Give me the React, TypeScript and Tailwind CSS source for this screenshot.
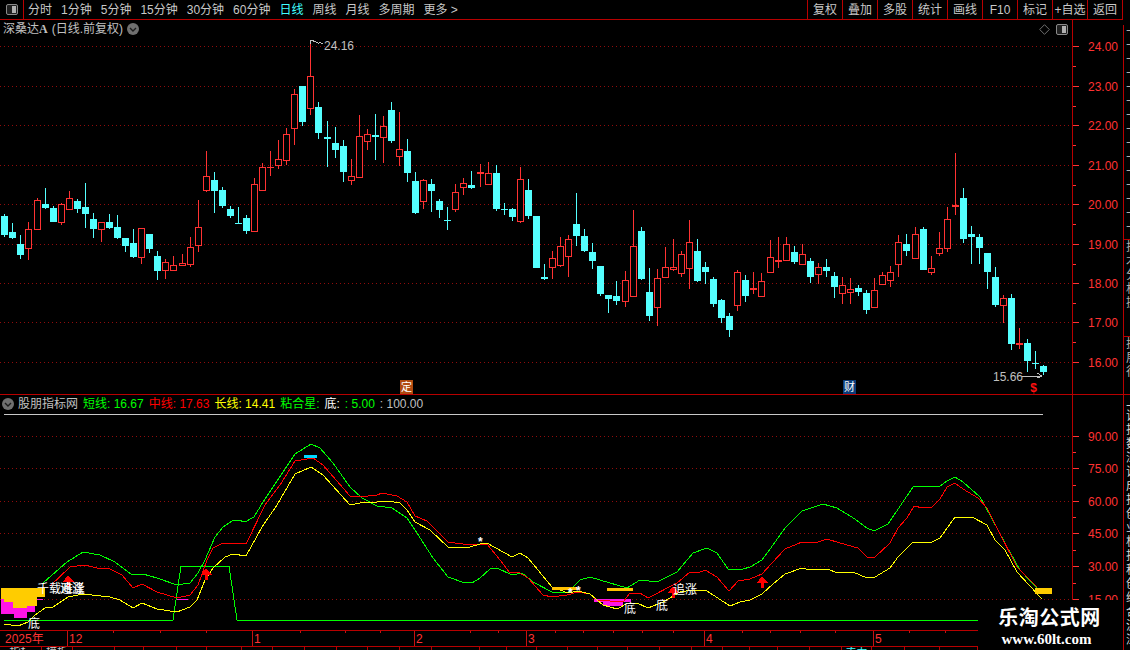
const RED = "#ff3232";
const LINE = "border-[#b80000]";

// candle rows: [isRed, bodyTop, bodyBottom, high, low], measured from a base y at 3x
type Row = number[];
const seg = (base: number, rows: Row[]) =>
  rows.map(([r, t, b, h, l]) => ({
    red: r === 1,
    top: Math.round(base + t / 3),
    bot: Math.round(base + b / 3),
    high: Math.round(base + h / 3),
    low: Math.round(base + l / 3),
  }));

const candles = [
  ...seg(140, [
    [0, 228, 285, 222, 290], [0, 276, 294, 249, 297], [0, 312, 345, 285, 357], [1, 267, 326, 246, 360],
    [1, 181, 269, 175, 269], [0, 192, 204, 144, 207], [0, 204, 246, 198, 246], [1, 193, 248, 190, 255],
    [1, 175, 209, 153, 209], [0, 183, 207, 177, 219], [0, 201, 222, 129, 264], [0, 237, 267, 219, 294],
    [1, 246, 269, 246, 306], [0, 246, 264, 222, 267], [0, 261, 294, 225, 297], [0, 294, 318, 294, 336],
    [0, 309, 351, 267, 354], [1, 265, 353, 265, 372], [0, 282, 327, 282, 339], [0, 348, 393, 333, 420],
    [1, 367, 392, 357, 417], [1, 376, 392, 348, 392], [1, 370, 377, 342, 377], [1, 322, 374, 291, 381],
    [1, 262, 317, 180, 336], [1, 109, 152, 33, 155], [0, 120, 153, 96, 219], [0, 150, 198, 141, 204],
    [0, 207, 228, 198, 234], [0, 249, 252, 201, 252], [0, 234, 273, 225, 282], [1, 133, 275, 114, 275],
    [1, 81, 152, 69, 152], [1, 81, 84, 33, 108], [1, 57, 77, 0, 87], [1, -18, 62, -36, 75],
  ]),
  ...seg(30, [
    [1, 193, 298, 178, 345], [0, 168, 275, 168, 288], [1, 139, 236, 30, 255], [0, 231, 309, 216, 327],
    [0, 321, 327, 273, 411], [0, 339, 360, 291, 384], [0, 348, 426, 330, 456], [1, 439, 452, 387, 465],
    [1, 319, 443, 255, 443], [1, 313, 335, 297, 360], [0, 315, 321, 252, 390], [1, 289, 323, 258, 399],
    [0, 240, 333, 216, 339], [1, 358, 380, 246, 408], [0, 363, 429, 327, 456], [0, 453, 549, 426, 552],
    [1, 451, 515, 447, 537], [0, 462, 483, 447, 546], [0, 513, 540, 507, 564], [0, 570, 573, 531, 600],
    [1, 487, 539, 462, 546], [1, 460, 473, 444, 495], [0, 465, 474, 423, 477], [1, 426, 431, 402, 471],
    [1, 430, 464, 396, 464], [0, 429, 537, 405, 543], [0, 537, 540, 519, 555], [0, 537, 561, 534, 573],
    [1, 447, 575, 411, 579], [0, 480, 558, 447, 567], [0, 558, 714, 558, 714], [0, 741, 747, 702, 750],
    [1, 685, 713, 663, 747], [1, 649, 707, 621, 711], [1, 628, 680, 615, 741], [0, 582, 618, 489, 648],
  ]),
  ...seg(140, [
    [0, 288, 333, 267, 336], [0, 336, 363, 309, 387], [0, 378, 462, 378, 468], [0, 465, 477, 465, 519],
    [0, 468, 483, 423, 495], [1, 421, 485, 393, 501], [1, 319, 470, 210, 470], [0, 273, 417, 261, 420],
    [0, 456, 528, 384, 543], [1, 415, 503, 388, 558], [1, 382, 413, 321, 413], [1, 382, 389, 297, 393],
    [1, 343, 401, 333, 411], [1, 307, 386, 240, 447], [0, 333, 423, 297, 426], [0, 381, 396, 366, 432],
    [0, 417, 492, 411, 501], [0, 480, 534, 477, 549], [0, 528, 570, 519, 591], [1, 397, 497, 390, 513],
    [0, 420, 468, 405, 486], [1, 444, 449, 396, 462], [1, 424, 470, 400, 470], [1, 352, 398, 300, 398],
    [1, 360, 365, 291, 384], [1, 313, 362, 291, 362], [0, 336, 366, 318, 372], [1, 343, 374, 312, 374],
    [0, 363, 411, 354, 429], [1, 382, 404, 369, 432], [0, 381, 393, 357, 411], [0, 408, 441, 396, 474],
    [1, 436, 461, 411, 492], [1, 448, 458, 414, 492], [0, 444, 456, 435, 468], [0, 459, 510, 450, 522],
    [1, 451, 503, 414, 503], [1, 406, 434, 396, 434], [1, 397, 422, 378, 441], [1, 307, 374, 285, 411],
    [0, 312, 333, 282, 348], [1, 283, 356, 261, 356], [0, 267, 390, 261, 390], [1, 385, 398, 348, 405],
    [1, 325, 341, 276, 348], [1, 238, 326, 201, 336], [1, 195, 200, 39, 225], [0, 174, 297, 144, 309],
    [0, 282, 291, 258, 372], [0, 291, 324, 282, 372], [0, 339, 396, 339, 447], [0, 411, 495, 381, 501],
    [1, 475, 497, 466, 549], [0, 474, 612, 462, 630], [1, 609, 614, 564, 627], [0, 609, 663, 597, 696],
    [0, 669, 672, 633, 687], [0, 678, 696, 675, 705],
  ]),
];

const greenLine =
  "43,583 67,562 83,552 100,555 115,562 132,575 143,574 157,578 177,585 190,583 198,573 205,560 215,537 223,527 232,521 238,520 245,522 254,517 263,502 295,454 311,444 320,448 333,463 350,487 362,498 377,506 392,508 407,518 417,533 433,558 448,577 462,582 472,583 480,578 490,569 497,568 512,575 522,573 533,582 552,592 567,593 580,580 590,577 600,580 627,588 640,580 657,582 677,572 693,553 707,548 717,553 728,569 743,569 750,567 762,560 773,545 785,528 802,511 823,504 837,508 855,519 867,528 874,531 888,524 913,487 923,486 932,487 940,486 947,481 955,477 963,482 980,497 990,515 1007,547 1020,570 1037,588";
const redLine =
  "50,586 70,567 85,565 97,568 108,568 122,575 133,588 142,584 157,592 177,598 190,595 198,585 207,560 213,548 223,543 233,543 246,544 265,505 280,485 295,461 313,458 323,465 350,496 360,497 377,495 382,493 397,496 407,502 415,516 427,521 443,537 448,542 470,545 480,544 487,544 500,560 510,573 518,572 528,578 543,595 552,597 567,595 578,592 590,594 597,600 623,602 630,593 640,593 648,598 677,583 690,572 698,573 705,570 717,577 729,591 738,581 750,579 762,574 772,563 785,549 802,542 810,543 818,542 827,539 840,543 858,548 867,557 875,557 890,543 898,528 907,518 914,506 923,508 932,507 940,499 947,487 955,483 963,489 978,498 987,508 997,528 1017,567 1037,587";
const yellowLine =
  "4,624 18,626 28,622 35,615 45,608 53,607 68,597 83,594 110,597 120,600 133,608 142,603 157,609 177,612 190,607 197,600 205,580 213,568 225,557 233,554 246,556 262,527 277,505 295,474 311,467 323,475 350,505 360,503 377,502 388,501 400,503 407,510 415,522 430,530 448,547 470,547 480,544 487,543 512,557 520,553 528,558 552,587 568,593 578,591 590,594 603,605 617,609 628,603 637,603 648,608 663,602 680,592 693,590 707,591 730,606 740,602 750,600 762,594 773,584 785,574 802,568 810,570 827,569 838,573 853,572 867,578 875,577 890,568 898,557 913,542 930,543 940,538 955,517 972,517 987,525 995,540 1005,550 1017,572 1042,599";

const priceTicks = [24, 23, 22, 21, 20, 19, 18, 17, 16].map((v, i) => ({
  label: v.toFixed(2),
  y: [46, 86, 125, 165, 204, 244, 283, 322, 362][i],
}));
const indicatorTicks = [90, 75, 60, 45, 30, 15].map((v, i) => ({
  label: v.toFixed(2),
  y: [436, 468, 501, 533, 566, 599][i],
}));

const leftTabs = ["分时", "1分钟", "5分钟", "15分钟", "30分钟", "60分钟", "日线", "周线", "月线", "多周期", "更多 >"];
const rightTabs = ["复权", "叠加", "多股", "统计", "画线", "F10", "标记", "+自选", "返回"];

const bottomTabs = [
  [42, "指标"], [73, "模板"], [115, ""], [144, ""], [177, ""], [207, ""], [242, ""], [273, ""],
  [305, ""], [337, ""], [368, ""], [400, ""], [432, ""], [480, ""], [507, ""], [537, ""],
  [568, ""], [598, ""], [628, ""], [660, ""], [692, ""], [723, ""], [750, ""], [778, ""],
  [810, ""], [842, ""], [872, "主力"], [905, ""], [940, ""], [978, ""],
] as [number, string][];

const stripSections = [
  { h: "h-[215px]", border: true, text: "十十十十十十十十十十十十十十十", color: "text-[#b0b0b0]" },
  { h: "h-[97px]", border: true, text: "技术分析操", color: "text-[#b0b0b0]" },
  { h: "h-[58px]", border: true, text: "扩展行", color: "text-[#b0b0b0]" },
  { h: "flex-1", border: false, text: "上证指数深证成指创业板指科创综合沪深", color: "text-[#d8d8d8]" },
];

function PanelIcon() {
  return (
    <svg width="12" height="11" viewBox="0 0 12 11" className="block">
      <rect x="0.5" y="0.5" width="11" height="10" rx="1.5" fill="#202020" stroke="#8a8a8a" />
      <rect x="6" y="2" width="4" height="7" fill="#b0b0b0" />
    </svg>
  );
}

function Chevron() {
  return (
    <svg width="12" height="12" viewBox="0 0 12 12" className="block">
      <circle cx="6" cy="6" r="6" fill="#707070" />
      <path d="M3 5l3 3 3-3" fill="none" stroke="#1c1c1c" strokeWidth="1.4" />
    </svg>
  );
}

function Grid({ ys }: { ys: number[] }) {
  return (
    <>
      {ys.map((y) => (
        <line key={y} x1="0" x2="1072" y1={y + 0.5} y2={y + 0.5} stroke="#900c0c" strokeDasharray="1 3" />
      ))}
    </>
  );
}

function UpArrow({ x, y }: { x: number; y: number }) {
  return <path d={`M${x} ${y}l6 7h-4v5h-3v-5h-4z`} fill="#ff0000" />;
}

function PriceChart() {
  return (
    <svg width="1072" height="356" viewBox="0 38 1072 356" className="block" shapeRendering="crispEdges">
      <Grid ys={priceTicks.map((t) => t.y)} />
      {candles.map((c, i) => {
        const x = Math.round(4.3 + 8.055 * i);
        const color = c.red ? RED : "#54ffff";
        const h = Math.max(c.bot - c.top, 1);
        return (
          <g key={i}>
            <rect x={x} y={c.high} width="1" height={c.low - c.high} fill={color} />
            {c.red && h > 2 ? (
              <rect x={x - 2.5} y={c.top + 0.5} width="6" height={h - 1} fill="#000" stroke={color} />
            ) : (
              <rect x={x - 3} y={c.top} width="7" height={h} fill={color} />
            )}
          </g>
        );
      })}
      <path d="M310.5 44V40.5h3M313 41c3 0 4 3 6 2s2 0 4 1" fill="none" stroke="#c0c0c0" />
      <text x="324" y="50" fill="#c0c0c0" fontSize="12">24.16</text>
      <path d="M1022 376h19M1037 373l5 3-5 2" fill="none" stroke="#c0c0c0" />
      <text x="993" y="381" fill="#c0c0c0" fontSize="12">15.66</text>
      <rect x="400" y="380" width="13" height="14" fill="#b04a10" />
      <text x="406.5" y="391" fill="#fff" fontSize="11" textAnchor="middle">定</text>
      <rect x="843" y="380" width="13" height="14" fill="#0c3c78" />
      <text x="849.5" y="391" fill="#fff" fontSize="11" textAnchor="middle">财</text>
      <text x="1033.5" y="392" fill="#ff1010" fontSize="12" fontWeight="700" textAnchor="middle">$</text>
    </svg>
  );
}

function IndicatorChart() {
  const white = "#ffffff";
  return (
    <svg width="1072" height="218" viewBox="0 412 1072 218" className="block" shapeRendering="crispEdges">
      <Grid ys={indicatorTicks.map((t) => t.y)} />
      <rect x="4" y="414" width="1039" height="1" fill="#c8c8c8" />

      <polygon
        points="1,588 45,588 45,597 37,597 37,606 27,606 27,608 13,608 13,602 4,602 4,599 1,599"
        fill="#ffcc00"
      />
      <polygon
        points="1,599 4,599 4,602 13,602 13,608 27,608 27,606 35,606 35,612 27,612 27,618 14,618 14,614 1,614"
        fill="#ff14e6"
      />
      <rect x="37" y="599" width="6" height="1" fill="#ff14e6" />
      <rect x="177" y="599" width="11" height="1" fill="#ff14e6" />
      <polygon points="594,599 631,599 631,602 623,602 623,606 603,606 603,602 594,602" fill="#ff14e6" />

      <polyline
        points="4,620 173,620 181,566 229,566 237,620 1072,620"
        fill="none"
        stroke="#00ff00"
      />
      <polyline points={greenLine} fill="none" stroke="#00ff00" />
      <polyline points={redLine} fill="none" stroke="#ff0000" />
      <polyline points={yellowLine} fill="none" stroke="#ffff00" />

      <rect x="304" y="455" width="13" height="3" fill="#00d8ff" />
      <rect x="552" y="587" width="25" height="3" fill="#ffc000" />
      <rect x="607" y="588" width="26" height="3" fill="#ffc000" />
      <rect x="1035" y="588" width="17" height="6" fill="#ffcc00" />

      <UpArrow x={68} y={575} />
      <UpArrow x={206} y={568} />
      <UpArrow x={673} y={586} />
      <UpArrow x={762} y={576} />

      <text x="37" y="593" fill={white} fontSize="12">千载难逢</text>
      <text x="60" y="593" fill={white} fontSize="12">追涨</text>
      <text x="28" y="628" fill={white} fontSize="12">底</text>
      <text x="624" y="613" fill={white} fontSize="12">底</text>
      <text x="656" y="610" fill={white} fontSize="12">底</text>
      <text x="673" y="594" fill={white} fontSize="12">追涨</text>
      <text x="478" y="546" fill={white} fontSize="12" fontWeight="700">*</text>
      <text x="568" y="597" fill={white} fontSize="12" fontWeight="700">*</text>
      <text x="576" y="595" fill={white} fontSize="12" fontWeight="700">*</text>
    </svg>
  );
}

function Axis({ ticks, top, height }: { ticks: { label: string; y: number }[]; top: number; height: number }) {
  return (
    <svg
      width="50"
      height={height}
      viewBox={`1073 ${top} 50 ${height}`}
      className="block"
      shapeRendering="crispEdges"
    >
      {ticks.map((t, i) => (
        <g key={t.label}>
          <rect x="1073" y={t.y} width="6" height="1" fill={RED} />
          {i > 0 && <rect x="1073" y={Math.round((t.y + ticks[i - 1].y) / 2)} width="3" height="1" fill={RED} />}
          <text x="1118" y={t.y + 5} fill={RED} fontSize="12" textAnchor="end">{t.label}</text>
        </g>
      ))}
    </svg>
  );
}

function TimeAxis() {
  const majors: [number, string][] = [[67, "12"], [252, "1"], [414, "2"], [526, "3"], [704, "4"], [873, "5"]];
  const minors = [113, 160, 206, 300, 345, 380, 470, 498, 555, 583, 613, 642, 673, 742, 770, 800, 835, 909, 945];
  return (
    <svg width="1123" height="15" viewBox="0 631 1123 15" className="block" shapeRendering="crispEdges">
      {minors.map((x) => (
        <rect key={x} x={x} y="631" width="1" height="2" fill="#c81010" />
      ))}
      {majors.map(([x, label]) => (
        <g key={x}>
          <rect x={x} y="631" width="1" height="15" fill="#c81010" />
          <text x={x + 2} y="643" fill={RED} fontSize="12">{label}</text>
        </g>
      ))}
      <text x="5" y="643" fill={RED} fontSize="12">2025年</text>
    </svg>
  );
}

export default function App() {
  return (
    <div className="relative flex h-[650px] w-[1130px] overflow-hidden bg-black font-['Liberation_Sans','Noto_Sans_CJK_SC',sans-serif] text-[12px] text-[#c8c8c8]">
      <div className="flex w-[1123px] flex-col">
        {/* top toolbar */}
        <div className={`flex h-5 shrink-0 items-center border-b ${LINE}`}>
          <div className={`flex h-full w-6 shrink-0 items-center justify-center border-r ${LINE}`}>
            <PanelIcon />
          </div>
          <div className="ml-1 flex flex-1 gap-[9px]">
            {leftTabs.map((t) => (
              <span key={t} className={t === "日线" ? "text-[#40ffff]" : ""}>{t}</span>
            ))}
          </div>
          <div className={`flex h-full border-l ${LINE}`}>
            {rightTabs.map((t) => (
              <div key={t} className={`flex h-full w-[35px] items-center justify-center border-r ${LINE}`}>{t}</div>
            ))}
          </div>
        </div>

        {/* price panel */}
        <div className={`flex h-[375px] shrink-0 border-b ${LINE}`}>
          <div className="w-[1072px] shrink-0">
            <div className="flex h-[18px] items-center justify-between pl-[3px] pr-[4px]">
              <div className="flex items-center gap-[4px] text-[#c0c0c0]">
                <span>
                  深桑达<span className="font-['Liberation_Serif',serif] font-bold">A</span>
                </span>
                <span>(日线.前复权)</span>
                <Chevron />
              </div>
              <div className="flex items-center gap-[6px]">
                <svg width="11" height="11" viewBox="0 0 11 11" className="block">
                  <path d="M5.5 .7l4.8 4.8-4.8 4.8L.7 5.5z" fill="none" stroke="#707070" />
                </svg>
                <PanelIcon />
              </div>
            </div>
            <PriceChart />
          </div>
          <div className={`flex-1 border-l ${LINE}`}>
            <Axis ticks={priceTicks} top={20} height={374} />
          </div>
        </div>

        {/* indicator panel */}
        <div className="flex h-[235px] shrink-0">
          <div className="w-[1072px] shrink-0">
            <div className="flex h-[17px] items-center gap-[5px] pl-[2px]">
              <Chevron />
              <span className="-ml-[1px] text-[#c0c0c0]">股朋指标网</span>
              <span className="text-[#00ff00]">短线: 16.67</span>
              <span className="text-[#ff0000]">中线: 17.63</span>
              <span className="text-[#ffff00]">长线: 14.41</span>
              <span className="text-[#00ff00]">粘合星:</span>
              <span className="text-[#ffffff]">底:</span>
              <span className="text-[#00ff00]">: 5.00</span>
              <span className="text-[#c0c0c0]">: 100.00</span>
            </div>
            <IndicatorChart />
          </div>
          <div className={`flex-1 border-l ${LINE}`}>
            <Axis ticks={indicatorTicks} top={395} height={235} />
          </div>
        </div>

        {/* time axis */}
        <div className={`h-[17px] shrink-0 border-y ${LINE}`}>
          <TimeAxis />
        </div>

        {/* bottom tabs, mostly cut off by the window */}
        <div className="flex h-[3px] shrink-0 overflow-hidden text-[11px] leading-[11px]">
          {bottomTabs.map(([end, label], i) => (
            <div
              key={end}
              className={`shrink-0 border-r ${LINE} text-center ${end === 872 ? "text-[#40ffff]" : ""}`}
              style={{ width: end - (i ? bottomTabs[i - 1][0] : 0) }}
            >
              {label}
            </div>
          ))}
        </div>
      </div>

      {/* cut-off side strip */}
      <div className="flex w-[7px] flex-col pt-[25px] overflow-hidden">
        {stripSections.map((s) => (
          <div
            key={s.h}
            className={`${s.h} flex flex-col overflow-hidden border-l pl-[2px] ${LINE} ${s.border ? "border-b" : ""} ${s.color}`}
          >
            {s.text.split("").map((ch, i) => (
              <span key={i} className="h-[14px] shrink-0 leading-[14px]">{ch}</span>
            ))}
          </div>
        ))}
      </div>

      {/* watermark pasted over the corner */}
      <div className="absolute left-[978px] top-[600px] flex h-[50px] w-[145px] flex-col items-center bg-black pr-[2px] pt-[6px] text-white">
        <span className="text-[20px] font-bold leading-[24px] tracking-[0.5px]">乐淘公式网</span>
        <span className="mr-[6px] font-['Liberation_Serif',serif] text-[15px] font-bold leading-[18px]">www.60lt.com</span>
      </div>
    </div>
  );
}
